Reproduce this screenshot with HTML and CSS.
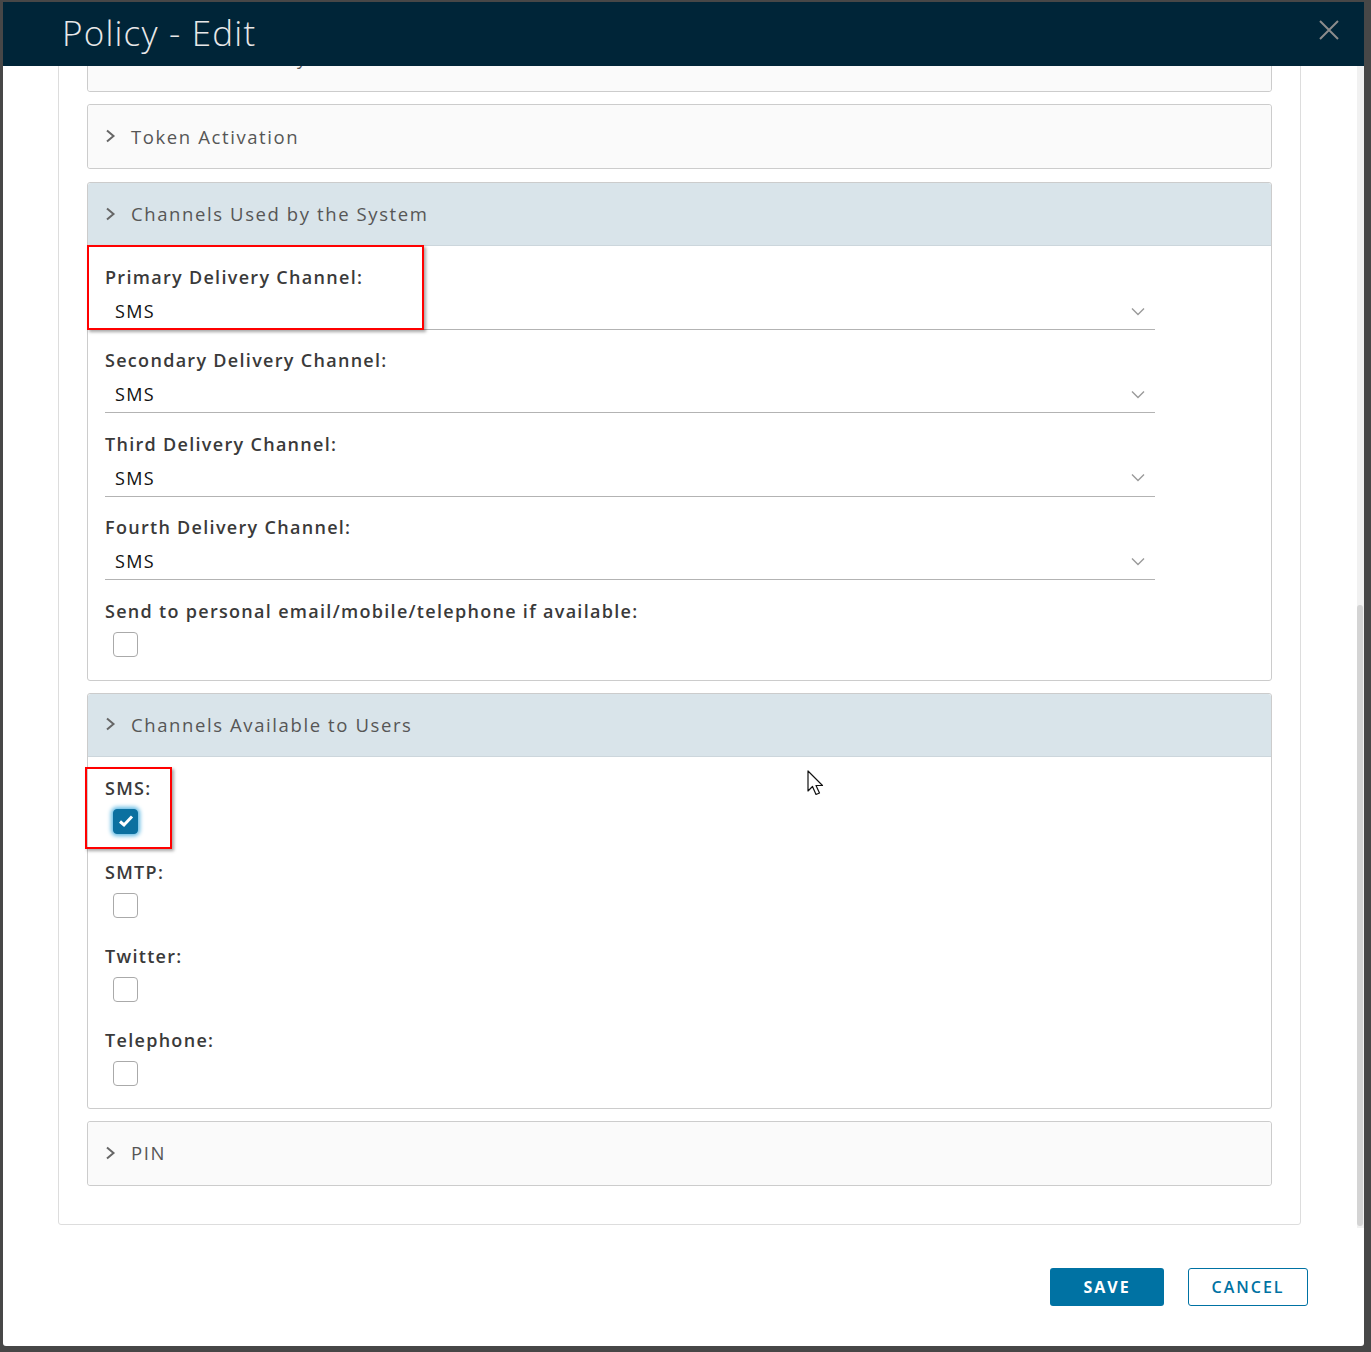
FILE: index.html
```html
<!DOCTYPE html>
<html lang="en">
<head>
    <meta charset="UTF-8">
    <title>Policy - Edit</title>
    <link rel="stylesheet" href="styles.css">
</head>
<body>

<div class="modal">
    <div class="modal-header">
        <h1 class="modal-title">Policy - Edit</h1>
        <button class="close-btn" aria-label="Close">
            <svg width="22" height="22" viewBox="0 0 22 22"><path d="M2 2 L20 20 M20 2 L2 20" stroke="#8c8c8c" stroke-width="2" fill="none"/></svg>
        </button>
    </div>

    <div class="modal-body">
        <div class="card">
            <div class="panel">
                <div class="panel-head first">
                    <svg class="chevron" width="12" height="14" viewBox="0 0 12 14"><path d="M2 1.5 L8.5 7 L2 12.5" stroke="#666" stroke-width="2" fill="none"/></svg>
                    <span>Enrollment Policy</span>
                </div>
            </div>

            <div class="panel">
                <div class="panel-head">
                    <svg class="chevron" width="12" height="14" viewBox="0 0 12 14"><path d="M2 1.5 L8.5 7 L2 12.5" stroke="#666" stroke-width="2" fill="none"/></svg>
                    <span>Token Activation</span>
                </div>
            </div>

            <div class="panel open">
                <div class="panel-head">
                    <svg class="chevron" width="12" height="14" viewBox="0 0 12 14"><path d="M2 1.5 L8.5 7 L2 12.5" stroke="#666" stroke-width="2" fill="none"/></svg>
                    <span>Channels Used by the System</span>
                </div>
                <div class="panel-content">
                    <div class="field">
                        <span class="highlight hl-primary"></span>
                        <label class="field-label">Primary Delivery Channel:</label>
                        <div class="select">
                            <span>SMS</span>
                            <svg width="14" height="9" viewBox="0 0 14 9"><path d="M1 1.5 L7 7.5 L13 1.5" stroke="#9a9a9a" stroke-width="1.4" fill="none"/></svg>
                        </div>
                    </div>
                    <div class="field">
                        <label class="field-label">Secondary Delivery Channel:</label>
                        <div class="select">
                            <span>SMS</span>
                            <svg width="14" height="9" viewBox="0 0 14 9"><path d="M1 1.5 L7 7.5 L13 1.5" stroke="#9a9a9a" stroke-width="1.4" fill="none"/></svg>
                        </div>
                    </div>
                    <div class="field">
                        <label class="field-label">Third Delivery Channel:</label>
                        <div class="select">
                            <span>SMS</span>
                            <svg width="14" height="9" viewBox="0 0 14 9"><path d="M1 1.5 L7 7.5 L13 1.5" stroke="#9a9a9a" stroke-width="1.4" fill="none"/></svg>
                        </div>
                    </div>
                    <div class="field">
                        <label class="field-label">Fourth Delivery Channel:</label>
                        <div class="select">
                            <span>SMS</span>
                            <svg width="14" height="9" viewBox="0 0 14 9"><path d="M1 1.5 L7 7.5 L13 1.5" stroke="#9a9a9a" stroke-width="1.4" fill="none"/></svg>
                        </div>
                    </div>
                    <div class="check-field last">
                        <label class="field-label">Send to personal email/mobile/telephone if available:</label>
                        <span class="checkbox"></span>
                    </div>
                </div>
            </div>

            <div class="panel open">
                <div class="panel-head">
                    <svg class="chevron" width="12" height="14" viewBox="0 0 12 14"><path d="M2 1.5 L8.5 7 L2 12.5" stroke="#666" stroke-width="2" fill="none"/></svg>
                    <span>Channels Available to Users</span>
                </div>
                <div class="panel-content users">
                    <div class="check-field">
                        <span class="highlight hl-sms"></span>
                        <label class="field-label">SMS:</label>
                        <span class="checkbox checked">
                            <svg width="18" height="16" viewBox="0 0 18 16"><path d="M3 8.5 L7 12 L15 3.5" stroke="#fff" stroke-width="3" fill="none"/></svg>
                        </span>
                    </div>
                    <div class="check-field">
                        <label class="field-label">SMTP:</label>
                        <span class="checkbox"></span>
                    </div>
                    <div class="check-field">
                        <label class="field-label">Twitter:</label>
                        <span class="checkbox"></span>
                    </div>
                    <div class="check-field last">
                        <label class="field-label">Telephone:</label>
                        <span class="checkbox"></span>
                    </div>
                </div>
            </div>

            <div class="panel">
                <div class="panel-head">
                    <svg class="chevron" width="12" height="14" viewBox="0 0 12 14"><path d="M2 1.5 L8.5 7 L2 12.5" stroke="#666" stroke-width="2" fill="none"/></svg>
                    <span>PIN</span>
                </div>
            </div>
        </div>

        <div class="scrollbar"><div class="scroll-thumb"></div></div>
    </div>

    <div class="modal-footer">
        <button class="btn btn-primary">Save</button>
        <button class="btn btn-outline">Cancel</button>
    </div>

    <svg class="cursor" width="20" height="28" viewBox="0 0 20 28"><path d="M1 1 L1 21 L5.5 16.5 L9 24.5 L12.5 23 L9 15.5 L15.5 15.5 Z" fill="#fff" stroke="#111" stroke-width="1.2" stroke-linejoin="round"/></svg>
</div>

</body>
</html>
```

FILE: styles.css
```css
body {
    margin: 0;
    background-color: #474747;
    font-family: "Open Sans", Arial, sans-serif;
}
.modal {
    position: relative;
    margin: 2px 7px 0 3px;
    height: 1344px;
    background: #fff;
    border-radius: 0 0 3px 3px;
    display: flex;
    flex-direction: column;
}
.modal-header {
    height: 64px;
    background-color: #002538;
    display: flex;
    align-items: center;
    justify-content: space-between;
    flex-shrink: 0;
}
.modal-title {
    margin: -4px 0 0 59px;
    font-size: 35px;
    font-weight: 300;
    color: #e8e8e8;
    letter-spacing: 1.2px;
}
.close-btn {
    background: none;
    border: none;
    padding: 0;
    margin: -8px 24px 0 0;
    width: 22px;
    height: 22px;
    cursor: pointer;
}
.modal-body {
    position: relative;
    height: 1162px;
    overflow: hidden;
    flex-shrink: 0;
}
.card {
    margin: -60px 63px 0 55px;
    border: 1px solid #ddd;
    border-radius: 3px;
    padding: 20px 28px 38px;
}
.panel {
    border: 1px solid #ccc;
    border-radius: 3px;
    margin-bottom: 12px;
    background: #fff;
}
.panel:nth-child(2) {
    margin-bottom: 13px;
}
.panel:last-child {
    margin-bottom: 0;
}
.panel-head {
    height: 62px;
    padding: 0 0 1px 17px;
    background-color: #fafafa;
    display: flex;
    align-items: center;
    font-size: 18.5px;
    color: #565656;
    letter-spacing: 1.6px;
    border-radius: 3px;
}
.panel-head.first {
    height: 58px;
    padding-bottom: 5px;
}
.panel-head .chevron {
    margin-right: 14px;
}
.panel.open .panel-head {
    background-color: #d9e4ea;
    height: 61px;
    border-bottom: 1px solid #ccd6dc;
    border-radius: 3px 3px 0 0;
}
.panel-content {
    padding: 19px 116px 23px 17px;
}
.panel-content.users {
    padding-bottom: 22px;
}
.field {
    position: relative;
    margin-bottom: 18.4px;
}
.field-label {
    display: block;
    font-size: 18px;
    line-height: 24px;
    font-weight: 600;
    color: #3a3a3a;
    letter-spacing: 1.3px;
}
.select {
    margin-top: 4px;
    height: 36px;
    border-bottom: 1px solid #b3b3b3;
    display: flex;
    align-items: center;
    justify-content: space-between;
    padding: 0 10px 0 10px;
    font-size: 18px;
    letter-spacing: 1.4px;
    color: #111;
}
.check-field {
    position: relative;
    margin-bottom: 26px;
}
.check-field.last {
    margin-bottom: 0;
}
.checkbox {
    display: flex;
    align-items: center;
    justify-content: center;
    width: 23px;
    height: 23px;
    margin: 9px 0 0 8px;
    border: 1px solid #aaa;
    border-radius: 4px;
    background: #fff;
    box-sizing: content-box;
}
.checkbox.checked {
    background-color: #0b70a0;
    border-color: #0b70a0;
    box-shadow: 0 0 4px 2px #5fb9e3;
}
.highlight {
    position: absolute;
    border: 2px solid #f00;
    box-shadow: 2px 2px 3px rgba(0, 0, 0, 0.35);
    pointer-events: none;
}
.hl-primary {
    left: -18px;
    top: -20px;
    width: 333px;
    height: 81px;
}
.hl-sms {
    left: -20px;
    top: -9px;
    width: 83px;
    height: 78px;
}
.scrollbar {
    position: absolute;
    right: 0;
    top: 0;
    width: 7px;
    height: 100%;
    background: #f1f1f1;
}
.scroll-thumb {
    margin-top: 539px;
    width: 6px;
    height: 621px;
    background: #d4d4d4;
    border-radius: 3px;
}
.modal-footer {
    display: flex;
    justify-content: flex-end;
    gap: 24px;
    padding: 40px 56px 0 0;
}
.btn {
    height: 38px;
    border-radius: 3px;
    font-family: "Open Sans", Arial, sans-serif;
    font-size: 16px;
    font-weight: 700;
    text-transform: uppercase;
    letter-spacing: 2px;
    cursor: pointer;
}
.btn-primary {
    width: 114px;
    background-color: #0072a3;
    color: #fff;
    border: none;
}
.btn-outline {
    width: 120px;
    background: #fff;
    color: #0072a3;
    border: 1px solid #0072a3;
    font-weight: 600;
}
.cursor {
    position: absolute;
    left: 804px;
    top: 768px;
}
```
